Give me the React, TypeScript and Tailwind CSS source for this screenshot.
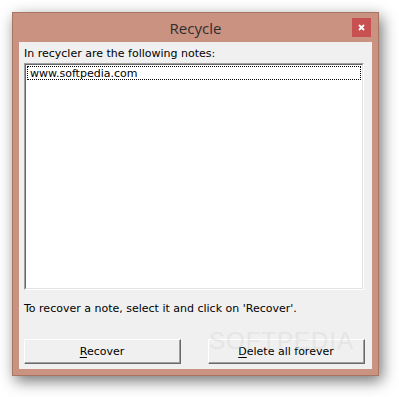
import React from "react";

const uiFont = { fontFamily: '"DejaVu Sans", sans-serif' };

function Btn({ mn, rest, className = "" }: { mn: string; rest: string; className?: string }) {
  return (
    <div
      className={`h-[25px] w-[157px] bg-[#f0f0f0] border-t border-l border-t-white border-l-white border-r border-b border-r-[#696969] border-b-[#696969] ${className}`}
    >
      <div className="h-full w-full border-r border-b border-r-[#a0a0a0] border-b-[#a0a0a0] flex items-center justify-center text-[11px] text-black leading-[13px]">
        <span>
          <span className="underline underline-offset-2">{mn}</span>
          {rest}
        </span>
      </div>
    </div>
  );
}

export default function App() {
  return (
    <div className="w-[399px] h-[397px] bg-white p-[12px] overflow-hidden" style={uiFont}>
      <div className="w-[367px] h-[364px] bg-[#c99281] border border-[#a87565] shadow-[3px_5px_14px_rgba(0,0,0,0.55)] flex flex-col">
        {/* title bar */}
        <div className="h-[29px] flex items-start relative">
          <div
            className="flex-1 text-center text-[15px] text-[#2e2e2e] pt-[5px] leading-[20px]"
            style={{ fontFamily: '"Open Sans", "Noto Sans", sans-serif' }}
          >
            Recycle
          </div>
          <div className="absolute right-[7px] top-[5px] w-[19px] h-[19px] bg-[#c75050] flex items-center justify-center">
            <svg width="7" height="7" viewBox="0 0 7 7">
              <path d="M1 1 L6 6 M6 1 L1 6" stroke="white" strokeWidth="1.8" />
            </svg>
          </div>
        </div>
        {/* client */}
        <div className="mx-[6px] w-[353px] h-[327px] bg-[#f0f0f0] flex flex-col px-[5px] relative overflow-hidden">
          <div className="pt-[5px] h-[21px] text-[11px] leading-[13px] text-black whitespace-nowrap">
            In recycler are the following notes:
          </div>
          <div className="w-[340px] h-[227px] border-t border-l border-t-[#a0a0a0] border-l-[#a0a0a0] border-r border-b border-r-white border-b-white">
            <div className="h-full w-full bg-white border-t border-l border-t-[#696969] border-l-[#696969] border-r border-b border-r-[#e3e3e3] border-b-[#e3e3e3] p-[1px]">
              <div className="h-[14px] border border-dotted border-black flex items-center pl-[2px] text-[11px] leading-[13px] text-black">
                www.softpedia.com
              </div>
            </div>
          </div>
          <div className="mt-[12px] h-[13px] text-[11px] leading-[13px] text-black whitespace-nowrap">
            To recover a note, select it and click on 'Recover'.
          </div>
          <div className="mt-[24px] flex gap-[27px]">
            <Btn mn="R" rest="ecover" />
            <Btn mn="D" rest="elete all forever" />
          </div>
          <div
            className="absolute left-[190px] top-[286px] text-[24px] leading-[26px] text-[#dcdcdc] opacity-50 tracking-[1px] pointer-events-none"
            style={{ fontFamily: '"Liberation Sans", sans-serif' }}
          >
            SOFTPEDIA
          </div>
        </div>
      </div>
    </div>
  );
}
